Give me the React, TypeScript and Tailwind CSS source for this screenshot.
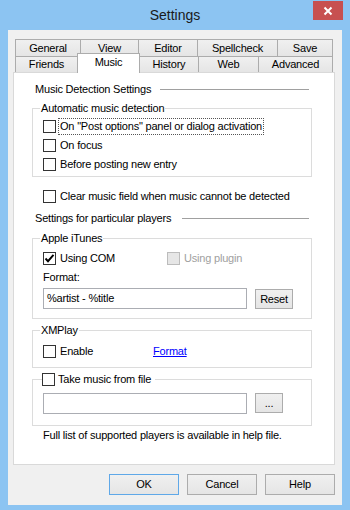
import React from "react";

const font = { fontFamily: '"Liberation Sans", Arial, sans-serif' };

function Box({ checked = false, disabled = false }: { checked?: boolean; disabled?: boolean }) {
  return (
    <span
      className={
        "inline-flex h-[13px] w-[13px] shrink-0 items-center justify-center border " +
        (disabled ? "border-[#bcbcbc] bg-[#e6e6e6]" : "border-[#333333] bg-white")
      }
    >
      {checked && (
        <svg width="11" height="11" viewBox="0 0 11 11">
          <path d="M1.5 5.5 L4 8.2 L9.5 1.8" fill="none" stroke="#000" strokeWidth="1.9" />
        </svg>
      )}
    </span>
  );
}

function Check({
  label,
  checked,
  disabled,
  focus,
  className = "",
}: {
  label: string;
  checked?: boolean;
  disabled?: boolean;
  focus?: boolean;
  className?: string;
}) {
  return (
    <div className={"flex h-[19px] items-center " + className}>
      <Box checked={checked} disabled={disabled} />
      <span
        className={
          "ml-[2px] whitespace-nowrap px-[1px] leading-[15px] " +
          (disabled ? "text-[#a0a0a0] " : "text-black ") +
          (focus ? "border border-dotted border-[#555]" : "border border-transparent")
        }
      >
        {label}
      </span>
    </div>
  );
}

function Tab({ label, w, first }: { label: string; w: string; first?: boolean }) {
  return (
    <div
      className={
        "flex h-full items-center justify-center border border-b-0 border-[#acacac] bg-gradient-to-b from-[#f0f0f0] to-[#e5e5e5] text-black " +
        w +
        (first ? "" : " -ml-px")
      }
    >
      {label}
    </div>
  );
}

function Header({ label, w }: { label: string; w: string }) {
  return (
    <div className="flex h-[16px] items-center pl-[3px] pr-[3px]">
      <span className={"whitespace-nowrap leading-[16px] " + w}>{label}</span>
      <span className="h-px flex-1 bg-[#a0a0a0]" />
    </div>
  );
}

function Btn({ label, className = "" }: { label: string; className?: string }) {
  return (
    <div
      className={
        "flex items-center justify-center border bg-gradient-to-b from-[#f0f0f0] to-[#e5e5e5] text-black " +
        className
      }
    >
      {label}
    </div>
  );
}

export default function App() {
  return (
    <div
      className="flex h-[510px] w-[350px] flex-col bg-[#8cc4f2] text-[11px] tracking-[-0.2px] text-black"
      style={font}
    >
      {/* title bar */}
      <div className="relative flex h-[30px] items-start justify-center">
        <span className="mt-[5px] text-[14px] leading-[20px] tracking-normal text-[#1a1a1a]">Settings</span>
        <div className="absolute right-[7px] top-[1px] flex h-[19px] w-[30px] items-center justify-center bg-[#c75050]">
          <svg width="10" height="10" viewBox="0 0 10 10">
            <path d="M1.5 1.5 L8.5 8.5 M8.5 1.5 L1.5 8.5" stroke="#fff" strokeWidth="2" />
          </svg>
        </div>
      </div>

      {/* client */}
      <div className="mx-[8px] mb-[5px] flex flex-1 flex-col bg-[#f0f0f0]">
        {/* tabs */}
        <div className="mt-[9px] pl-[7px]">
          <div className="flex h-[17px] leading-[15px]">
            <Tab label="General" w="w-[66px]" first />
            <Tab label="View" w="w-[59px]" />
            <Tab label="Editor" w="w-[60px]" />
            <Tab label="Spellcheck" w="w-[81px]" />
            <Tab label="Save" w="w-[56px]" />
          </div>
          <div className="flex h-[16px] items-end leading-[15px]">
            <Tab label="Friends" w="w-[63px]" first />
            <div className="relative z-10 -ml-[1px] -mb-px flex h-[20px] w-[63px] items-start justify-center border border-b-0 border-[#acacac] bg-white pt-[1px]">
              Music
            </div>
            <Tab label="History" w="w-[60px]" />
            <Tab label="Web" w="w-[61px]" />
            <Tab label="Advanced" w="w-[75px]" />
          </div>
        </div>

        {/* panel */}
        <div className="ml-[5px] flex h-[393px] w-[322px] flex-col border border-[#d9d9d9] bg-white pl-[18px]">
          <div className="flex w-[280px] flex-col">
            <div className="mt-[8px]">
              <Header label="Music Detection Settings" w="w-[125px]" />
            </div>

            <fieldset className="mt-[3px] border border-[#dcdcdc] pb-[2px] pl-[10px]">
              <legend className="-ml-[3px] px-[1px] leading-[16px]">Automatic music detection</legend>
              <Check label={'On "Post options" panel or dialog activation'} focus className="mt-[1px]" />
              <Check label="On focus" />
              <Check label="Before posting new entry" />
            </fieldset>

            <Check label="Clear music field when music cannot be detected" className="ml-[11px] mt-[10px]" />

            <div className="mt-[4px]">
              <Header label="Settings for particular players" w="w-[147px]" />
            </div>

            <fieldset className="mt-[4px] border border-[#dcdcdc] pb-[9px] pl-[10px]">
              <legend className="-ml-[3px] px-[1px] leading-[16px]">Apple iTunes</legend>
              <div className="mt-[3px] flex">
                <Check label="Using COM" checked className="w-[124px]" />
                <Check label="Using plugin" disabled />
              </div>
              <div className="mt-[1px] h-[16px] leading-[16px]">Format:</div>
              <div className="mt-[3px] flex items-start">
                <div className="flex h-[21px] w-[204px] items-center border border-[#abadb3] bg-white pl-[3px]">
                  %artist - %title
                </div>
                <Btn label="Reset" className="ml-[8px] mt-[1px] h-[20px] w-[38px] border-[#acacac]" />
              </div>
            </fieldset>

            <fieldset className="mt-[3px] border border-[#dcdcdc] pb-[6px] pl-[10px]">
              <legend className="-ml-[3px] px-[1px] leading-[16px]">XMPlay</legend>
              <div className="mt-[4px] flex items-center">
                <Check label="Enable" className="w-[110px]" />
                <span className="text-[#0000ff] underline">Format</span>
              </div>
            </fieldset>

            <fieldset className="mt-[3px] border border-[#dcdcdc] pb-[11px] pl-[10px]">
              <legend className="-ml-[1px] h-[16px] pr-[4px]">
                <div className="flex h-[16px] items-center">
                  <Box />
                  <span className="ml-[3px] whitespace-nowrap leading-[15px]">Take music from file</span>
                </div>
              </legend>
              <div className="mt-[6px] flex items-start">
                <div className="h-[21px] w-[204px] border border-[#abadb3] bg-white" />
                <Btn label="..." className="ml-[8px] h-[20px] w-[28px] border-[#acacac]" />
              </div>
            </fieldset>

            <div className="ml-[11px] mt-[1px] whitespace-nowrap leading-[16px]">
              Full list of supported players is available in help file.
            </div>
          </div>
        </div>

        {/* buttons */}
        <div className="mt-[9px] flex justify-end gap-[8px] pr-[7px]">
          <Btn label="OK" className="h-[21px] w-[70px] border-[#5fa8e8]" />
          <Btn label="Cancel" className="h-[21px] w-[70px] border-[#acacac]" />
          <Btn label="Help" className="h-[21px] w-[70px] border-[#acacac]" />
        </div>
      </div>
    </div>
  );
}
